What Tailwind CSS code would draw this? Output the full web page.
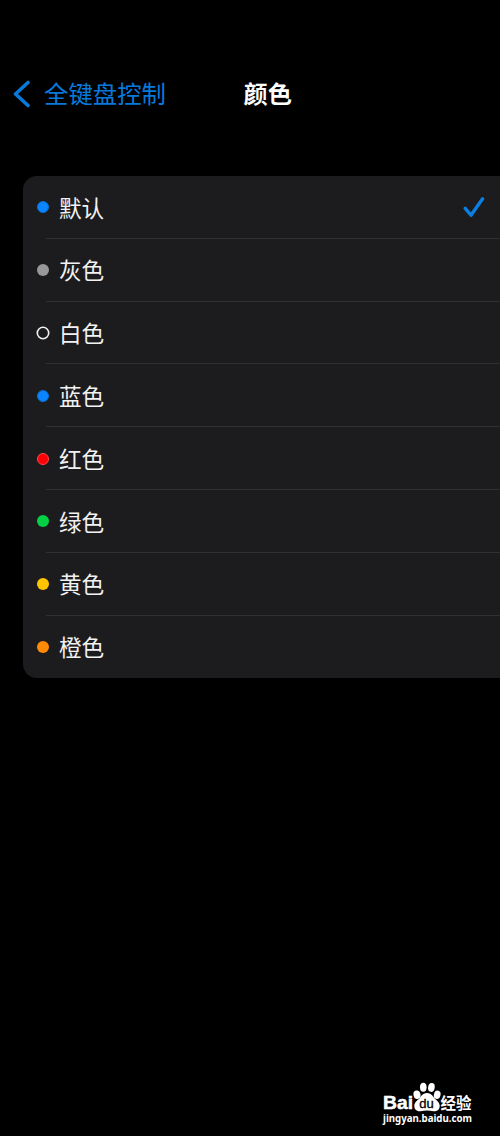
<!DOCTYPE html>
<html lang="zh-CN">

<head>
  <meta charset="UTF-8">
  <meta name="viewport" content="width=device-width, initial-scale=1.0">
  <title>颜色</title>
  <script src="https://cdn.jsdelivr.net/npm/@tailwindcss/browser@4"></script>
</head>

<body class="bg-black">
  <div class="relative flex h-[1136px] w-[500px] flex-col overflow-hidden bg-black font-['Noto_Sans_CJK_SC',sans-serif] text-white">

    <header class="mt-[70px] grid h-12 grid-cols-[243.5px_1fr] items-center">
      <a class="flex items-center pl-3 text-[#0879db]">
        <svg class="h-7 w-5" viewBox="0 0 20 28" fill="none" stroke="currentColor" stroke-width="3.6" stroke-linecap="round" stroke-linejoin="round">
          <path d="M16 2.5 3.5 14 16 25.500" />
        </svg>
        <span class="mb-0.5 ml-3 text-[24.4px] leading-none whitespace-nowrap">全键盘控制</span>
      </a>
      <h1 class="mb-0.5 text-[24.2px] leading-none font-bold">颜色</h1>
    </header>

    <main class="mt-[58px] ml-[23px]">
      <ul class="flex h-[502.4px] flex-col rounded-l-[14px] bg-[#1c1c1e] text-[22.6px] leading-none text-[#f2f2f2]">
        <li class="relative flex flex-1 items-center pl-3.5">
          <span class="size-3 rounded-full border border-[#0a6fd0] bg-[#0a84ff]"></span>
          <span class="mt-px ml-2.5">默认</span>
          <svg class="mr-3.5 ml-auto h-6 w-6" viewBox="0 0 24 24" fill="none" stroke="#0a7fe0" stroke-width="3.4" stroke-linecap="round" stroke-linejoin="round">
            <path d="M3.200 13.400 9 20.200 20.600 3.800" />
          </svg>
          <i class="absolute right-0 bottom-0 left-[23px] h-px bg-[#303032]"></i>
        </li>
        <li class="relative flex flex-1 items-center pl-3.5">
          <span class="size-3 rounded-full bg-[#98989a]"></span>
          <span class="mt-px ml-2.5">灰色</span>
          <i class="absolute right-0 bottom-0 left-[23px] h-px bg-[#303032]"></i>
        </li>
        <li class="relative flex flex-1 items-center pl-[13px]">
          <svg class="size-3.5" viewBox="0 0 14 14" fill="none" stroke="#f2f2f2" stroke-width="1.6">
            <circle cx="7" cy="7" r="5.7" />
          </svg>
          <span class="mt-px ml-[9px]">白色</span>
          <i class="absolute right-0 bottom-0 left-[23px] h-px bg-[#303032]"></i>
        </li>
        <li class="relative flex flex-1 items-center pl-3.5">
          <span class="size-3 rounded-full border border-[#0a6fd0] bg-[#0a84ff]"></span>
          <span class="mt-px ml-2.5">蓝色</span>
          <i class="absolute right-0 bottom-0 left-[23px] h-px bg-[#303032]"></i>
        </li>
        <li class="relative flex flex-1 items-center pl-3.5">
          <span class="size-3 rounded-full border border-[#ff4a45] bg-[#ff0008]"></span>
          <span class="mt-px ml-2.5">红色</span>
          <i class="absolute right-0 bottom-0 left-[23px] h-px bg-[#303032]"></i>
        </li>
        <li class="relative flex flex-1 items-center pl-3.5">
          <span class="size-3 rounded-full bg-[#04d045]"></span>
          <span class="mt-px ml-2.5">绿色</span>
          <i class="absolute right-0 bottom-0 left-[23px] h-px bg-[#303032]"></i>
        </li>
        <li class="relative flex flex-1 items-center pl-3.5">
          <span class="size-3 rounded-full bg-[#ffc400]"></span>
          <span class="mt-px ml-2.5">黄色</span>
          <i class="absolute right-0 bottom-0 left-[23px] h-px bg-[#303032]"></i>
        </li>
        <li class="relative flex flex-1 items-center pl-3.5">
          <span class="size-3 rounded-full bg-[#ff8a05]"></span>
          <span class="mt-px ml-2.5">橙色</span>
        </li>
      </ul>
    </main>

    <!-- watermark -->
    <svg class="absolute top-[1076px] left-[376px] h-[56px] w-[104px]" viewBox="0 0 104 56" fill="#fff">
      <text x="7" y="33.300" stroke="#fff" stroke-width=".5" font-family="Liberation Sans, sans-serif" font-weight="700" font-size="19" textLength="30" lengthAdjust="spacingAndGlyphs">Bai</text>
      <ellipse cx="41" cy="18.800" rx="3.500" ry="4.300" transform="rotate(-12 41 18.800)" />
      <ellipse cx="47.300" cy="11.200" rx="3.300" ry="4.500" />
      <ellipse cx="55.400" cy="11.400" rx="3.300" ry="4.500" transform="rotate(10 55.400 11.400)" />
      <ellipse cx="61.200" cy="18.800" rx="3.300" ry="4.200" transform="rotate(16 61.200 18.800)" />
      <path d="M51 17c-4 0-5.500 3-7.500 5.200-2.600 2.700-5.200 4.300-5.200 7.800 0 3.900 2.900 5.500 6.200 5.300 2.200-.1 4.300-.7 6.500-.7s4.300.6 6.500.7c3.600.2 6.200-1.700 6.200-5.300 0-3.500-2.600-5.100-5.200-7.800-2-2.200-3.500-5.200-7.500-5.200z" />
      <text x="43.300" y="32" fill="#000" stroke="#000" stroke-width=".3" font-family="Liberation Sans, sans-serif" font-size="12" textLength="14.500" lengthAdjust="spacingAndGlyphs">du</text>
      <text x="64.500" y="32.800" font-family="Noto Sans CJK SC, sans-serif" font-weight="700" font-size="15.500" textLength="31" lengthAdjust="spacingAndGlyphs">经验</text>
      <text x="7" y="46" font-family="Noto Sans, sans-serif" font-weight="700" font-size="10.300" textLength="89" lengthAdjust="spacingAndGlyphs">jingyan.baidu.com</text>
    </svg>
  </div>
</body>

</html>
